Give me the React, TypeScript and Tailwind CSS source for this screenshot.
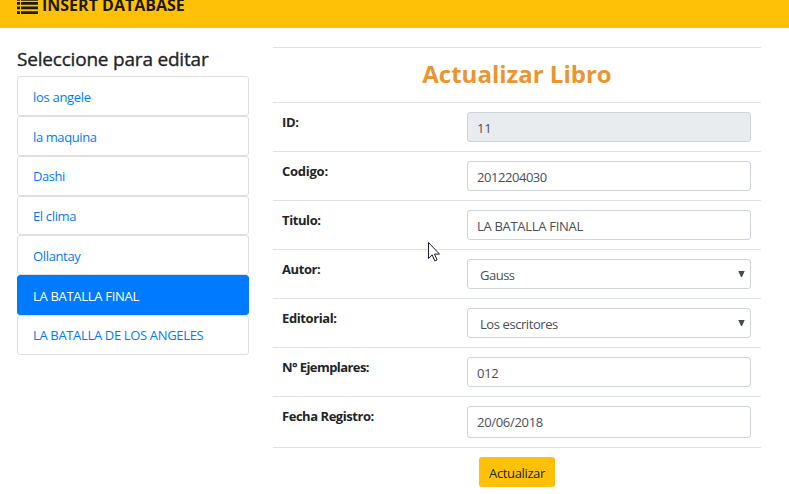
import React from "react";

const items = [
  { label: "los angele", box: "h-10 pt-1", tracking: "tracking-[-0.3px]" },
  { label: "la maquina", box: "h-10 pt-1", tracking: "tracking-[-0.4px]" },
  { label: "Dashi", box: "h-10 pt-0.5", tracking: "tracking-[-0.45px]" },
  { label: "El clima", box: "h-[39px] pt-[3px]", tracking: "tracking-[-0.35px]" },
  { label: "Ollantay", box: "h-10 pt-1", tracking: "tracking-[-0.35px]" },
  { label: "LA BATALLA FINAL", box: "h-10 pt-1", tracking: "tracking-[-0.3px]", active: true },
  { label: "LA BATALLA DE LOS ANGELES", box: "h-10 pt-0.5", tracking: "tracking-[-0.34px]" },
];

const fields = [
  { label: "ID:", value: "11", kind: "disabled", row: "h-[49px]", box: "h-[30px] pt-[3px]", lt: "tracking-[-0.4px]", vt: "tracking-[-0.3px]" },
  { label: "Codigo:", value: "2012204030", kind: "text", row: "h-[49px]", box: "h-[30px] pt-[3px]", lt: "tracking-[-0.25px]", vt: "tracking-[-0.45px]" },
  { label: "Titulo:", value: "LA BATALLA FINAL", kind: "text", row: "h-[49px]", box: "h-[30px] pt-[3px]", lt: "tracking-[-0.4px]", vt: "tracking-[-0.3px]" },
  { label: "Autor:", value: "Gauss", kind: "select", row: "h-[49px]", box: "h-[30px] pt-[3px]", lt: "tracking-[-0.4px]", vt: "tracking-[-0.5px]" },
  { label: "Editorial:", value: "Los escritores", kind: "select", row: "h-[49px]", box: "h-[30px] pt-[3px]", lt: "tracking-[-0.4px]", vt: "tracking-[-0.42px]" },
  { label: "N° Ejemplares:", value: "012", kind: "text", row: "h-[49px]", box: "h-[30px] pt-[3px]", lt: "tracking-[-0.58px]", vt: "tracking-[-0.3px]" },
  { label: "Fecha Registro:", value: "20/06/2018", kind: "text", row: "h-[51px]", box: "h-8 pt-px", lt: "tracking-[-0.46px]", vt: "tracking-[-0.3px]" },
];

export default function App() {
  return (
    <div className="relative h-[494px] w-[789px] overflow-hidden bg-white font-['Open_Sans','Noto_Sans',sans-serif] text-[13px] text-[#212529]">
      <header className="flex h-7 items-start bg-[#ffc107] pl-[17px] text-[#1f1a08]">
        <svg className="h-[14px] w-[21px] shrink-0" viewBox="0 0 21 14" fill="currentColor">
          <path d="M0 0h3v.7H0zM4 0h17v.7H4zM0 2h3v2.7H0zM4 2h17v2.7H4zM0 6.6h3v2.6H0zM4 6.6h17v2.6H4zM0 11.2h3V14H0zM4 11.2h17V14H4z" />
        </svg>
        <h1 className="-mt-[5px] ml-1 whitespace-nowrap text-[16px] font-bold leading-5">INSERT DATABASE</h1>
      </header>
      <main className="flex">
        <aside className="ml-[17px] w-[232px] pt-[19px]">
          <h2 className="h-[29px] whitespace-nowrap text-[19px] font-medium leading-6 tracking-[-0.2px] [-webkit-text-stroke:0.35px_#212529]">
            Seleccione para editar
          </h2>
          <ul>
            {items.map((it) => (
              <li
                key={it.label}
                className={`flex items-center whitespace-nowrap rounded-[3px] border pl-[15px] ${it.box} ${it.tracking} ${
                  it.active ? "border-[#007bff] bg-[#007bff] text-white" : "border-[#dfdfdf] text-[#007bff]"
                }`}
              >
                {it.label}
              </li>
            ))}
          </ul>
        </aside>
        <section className="ml-6 mt-[19px] w-[488px]">
          <div className="h-[55px] border-t border-[#dee2e6] pt-2 text-center text-[24px] font-bold leading-9 text-[#ea952f]">
            Actualizar Libro
          </div>
          {fields.map((f) => (
            <div key={f.label} className={`flex border-t border-[#dee2e6] pl-[9px] pr-[10px] pt-[9px] ${f.row}`}>
              <div className={`w-[185px] whitespace-nowrap font-bold leading-5 ${f.lt}`}>{f.label}</div>
              <div
                className={`flex flex-1 items-center justify-between rounded-[3px] border border-[#ced4da] pr-[5px] text-[#495057] ${f.box} ${
                  f.kind === "disabled" ? "bg-[#e9ecef]" : "bg-white"
                } ${f.kind === "select" ? "pl-3" : "pl-[9px]"}`}
              >
                <span className={`whitespace-nowrap ${f.vt}`}>{f.value}</span>
                {f.kind === "select" && (
                  <svg className="mb-1 h-[6px] w-[7px]" viewBox="0 0 7 6">
                    <path d="M0.3 0h6.4L4 6H3z" fill="#444b52" />
                  </svg>
                )}
              </div>
            </div>
          ))}
          <div className="border-t border-[#dee2e6] pl-[206px] pt-[9px]">
            <button className="flex h-[30px] w-[76px] items-center justify-center rounded-[3px] bg-[#ffc107] pt-[3px] tracking-[-0.36px]">
              Actualizar
            </button>
          </div>
        </section>
      </main>
      <svg className="absolute left-[428px] top-[242px] h-5 w-3" viewBox="0 0 12 20">
        <path d="M0.5 0.5v16l3.7-3.6 2.6 6 2.3-1-2.6-5.8h5z" fill="#fff" stroke="#1c1c30" />
      </svg>
    </div>
  );
}
